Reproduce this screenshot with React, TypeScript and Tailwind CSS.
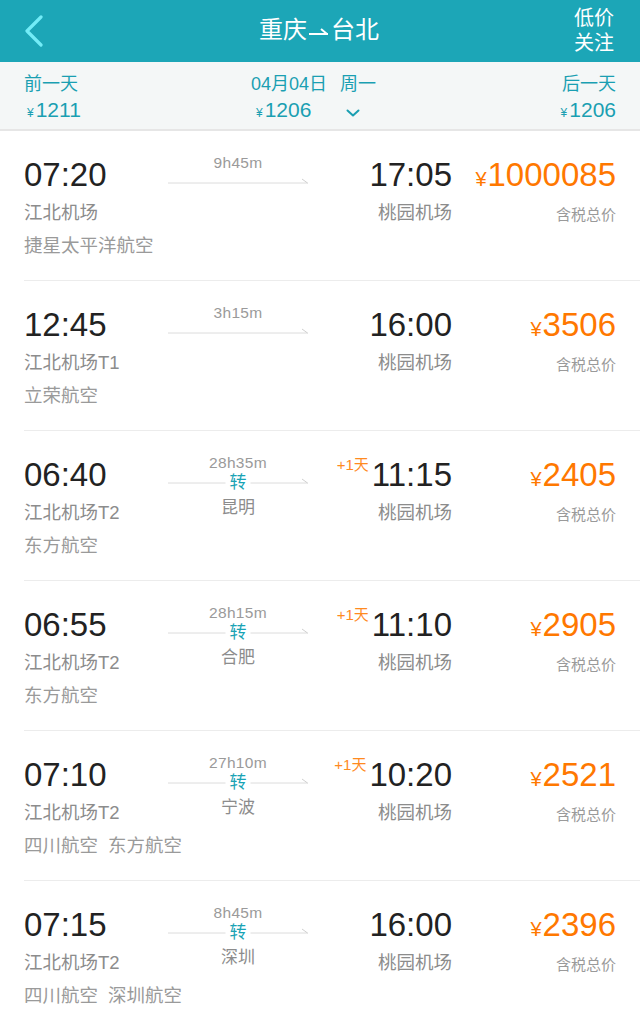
import React from "react";

type Flight = {
  dep: string;
  depAirport: string;
  airlines: string[];
  duration: string;
  via?: string;
  plusDay?: boolean;
  arr: string;
  arrAirport: string;
  price: string;
};

const flights: Flight[] = [
  { dep: "07:20", depAirport: "江北机场", airlines: ["捷星太平洋航空"], duration: "9h45m", arr: "17:05", arrAirport: "桃园机场", price: "1000085" },
  { dep: "12:45", depAirport: "江北机场T1", airlines: ["立荣航空"], duration: "3h15m", arr: "16:00", arrAirport: "桃园机场", price: "3506" },
  { dep: "06:40", depAirport: "江北机场T2", airlines: ["东方航空"], duration: "28h35m", via: "昆明", plusDay: true, arr: "11:15", arrAirport: "桃园机场", price: "2405" },
  { dep: "06:55", depAirport: "江北机场T2", airlines: ["东方航空"], duration: "28h15m", via: "合肥", plusDay: true, arr: "11:10", arrAirport: "桃园机场", price: "2905" },
  { dep: "07:10", depAirport: "江北机场T2", airlines: ["四川航空", "东方航空"], duration: "27h10m", via: "宁波", plusDay: true, arr: "10:20", arrAirport: "桃园机场", price: "2521" },
  { dep: "07:15", depAirport: "江北机场T2", airlines: ["四川航空", "深圳航空"], duration: "8h45m", via: "深圳", arr: "16:00", arrAirport: "桃园机场", price: "2396" },
];

const FONT = { fontFamily: '"Liberation Sans", "Noto Sans CJK SC", sans-serif' };

function Arrow() {
  return (
    <svg width="140" height="10" viewBox="0 0 140 10" className="block">
      <line x1="0" y1="6" x2="140" y2="6" stroke="#dcdcdc" strokeWidth="1" />
      <line x1="134" y1="2" x2="139.5" y2="6" stroke="#cfcfcf" strokeWidth="1" />
    </svg>
  );
}

function Row({ f }: { f: Flight }) {
  return (
    <div className="pl-[24px]">
      <div className="flex border-b border-[#ececec] pr-[24px] h-[150px]">
        <div className="w-[144px] pt-[26px]">
          <div className="text-[33px] leading-[36px] text-[#222]">{f.dep}</div>
          <div className="mt-[8px] text-[18.5px] leading-[24px] text-[#8c8c8c] whitespace-nowrap">{f.depAirport}</div>
          <div className="mt-[9px] flex gap-[10px] text-[18.5px] leading-[24px] text-[#9a9a9a] whitespace-nowrap">
            {f.airlines.map((a) => (
              <span key={a} className="whitespace-nowrap">{a}</span>
            ))}
          </div>
        </div>
        <div className="w-[140px] pt-[22px] flex flex-col items-center">
          <div className="text-[15.5px] leading-[20px] text-[#9a9a9a] tracking-[0.3px]">{f.duration}</div>
          <div className="relative h-[20px] w-[140px] flex items-center">
            <div className="mt-[-2px]">
              <Arrow />
            </div>
            {f.via && (
              <span className="absolute left-1/2 top-[0px] -translate-x-1/2 bg-white px-[4px] text-[17px] leading-[20px] text-[#1aa3b5]">
                转
              </span>
            )}
          </div>
          {f.via && <div className="mt-[4px] text-[17px] leading-[22px] text-[#8c8c8c]">{f.via}</div>}
        </div>
        <div className="w-[144px] pt-[26px] flex flex-col items-end">
          <div className="relative text-[33px] leading-[36px] text-[#222]">
            {f.plusDay && (
              <span className="absolute right-full top-[-2px] mr-[3px] text-[15px] leading-[20px] text-[#ff8a1f] whitespace-nowrap">
                +1天
              </span>
            )}
            {f.arr}
          </div>
          <div className="mt-[8px] text-[18.5px] leading-[24px] text-[#8c8c8c]">{f.arrAirport}</div>
        </div>
        <div className="w-[164px] pt-[26px] flex flex-col items-end">
          <div className="flex items-baseline text-[#ff7800] leading-[36px]">
            <span className="text-[20px] mr-[1px]">¥</span>
            <span className="text-[33px]">{f.price}</span>
          </div>
          <div className="mt-[7px] text-[15px] leading-[22px] text-[#9a9a9a]">含税总价</div>
        </div>
      </div>
    </div>
  );
}

export default function App() {
  return (
    <div className="w-[640px] h-[1016px] overflow-hidden bg-white" style={FONT}>
      {/* Header */}
      <div className="h-[62px] bg-[#1ca6b7] flex items-center px-[24px]">
        <div className="w-[60px] flex items-center">
          <svg width="20" height="32" viewBox="0 0 20 32">
            <polyline points="17,2 3,16 17,30" fill="none" stroke="#73ecf7" strokeWidth="3.2" strokeLinecap="round" strokeLinejoin="round" />
          </svg>
        </div>
        <div className="flex-1 flex justify-center items-center text-white text-[24px] leading-[30px] mt-[-2px]">
          <span>重庆</span>
          <svg width="22" height="14" viewBox="0 0 22 14" className="mx-[1px] mt-[4px]">
            <line x1="1" y1="9" x2="20" y2="9" stroke="white" strokeWidth="2" />
            <line x1="13" y1="4" x2="19" y2="9" stroke="white" strokeWidth="2" />
          </svg>
          <span>台北</span>
        </div>
        <div className="w-[60px] flex flex-col items-end text-white text-[20px] leading-[25px] mr-[2px]">
          <span>低价</span>
          <span>关注</span>
        </div>
      </div>
      {/* Date bar */}
      <div className="h-[69px] bg-[#f4f7f7] border-b-[2px] border-[#e6e6e6] flex px-[24px] pt-[10px] text-[#1a9fb2]">
        <div className="flex-1 flex flex-col items-start">
          <span className="text-[18px] leading-[24px]">前一天</span>
          <span className="flex items-baseline leading-[28px] ml-[3px]">
            <span className="text-[12px] mr-[2px]">¥</span>
            <span className="text-[21px]">1211</span>
          </span>
        </div>
        <div className="flex flex-col items-start w-[130px] ml-[-8px]">
          <span className="text-[18px] leading-[24px] whitespace-nowrap">
            04月04日<span className="ml-[13px]">周一</span>
          </span>
          <span className="flex items-center leading-[28px] ml-[5px]">
            <span className="flex items-baseline">
              <span className="text-[12px] mr-[2px]">¥</span>
              <span className="text-[21px]">1206</span>
            </span>
            <svg width="14" height="8" viewBox="0 0 14 8" className="ml-[35px] mt-[2px]">
              <polyline points="1.5,1.5 7,6.5 12.5,1.5" fill="none" stroke="#1a9fb2" strokeWidth="2" strokeLinecap="round" strokeLinejoin="round" />
            </svg>
          </span>
        </div>
        <div className="flex-1 flex flex-col items-end">
          <span className="text-[18px] leading-[24px]">后一天</span>
          <span className="flex items-baseline leading-[28px]">
            <span className="text-[12px] mr-[2px]">¥</span>
            <span className="text-[21px]">1206</span>
          </span>
        </div>
      </div>
      {/* List */}
      <div>
        {flights.map((f, i) => (
          <Row key={i} f={f} />
        ))}
      </div>
    </div>
  );
}
